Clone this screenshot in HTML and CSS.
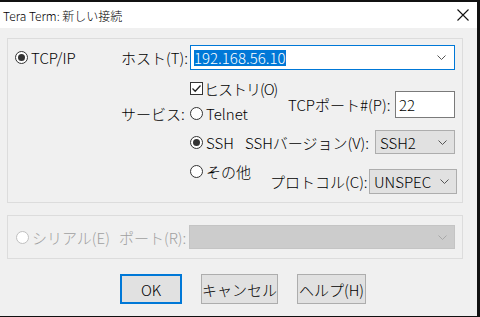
FILE: index.html
```html
<!DOCTYPE html>
<html lang="ja">
  <head>
    <meta charset="UTF-8" />
    <title>Tera Term: 新しい接続</title>
    <link rel="stylesheet" href="styles.css">
  </head>
  <body>
    <div class="window">
      <div class="titlebar">
        <span class="title">Tera Term: 新しい接続</span>
        <svg class="close" width="12" height="12" viewBox="0 0 12 12">
          <path d="M0.5 0.5 L11.5 11.5 M11.5 0.5 L0.5 11.5" stroke="#111" stroke-width="1.1" fill="none" />
        </svg>
      </div>

      <div class="dialog">
        <div class="group group-tcp">
          <label class="radio radio-main"><span class="circle checked"></span>TCP/IP</label>

          <div class="fields">
            <div class="host-row">
              <span class="lbl host-lbl">ホスト(T):</span>
              <div class="combo combo-host">
                <span class="selected">192.168.56.10</span>
                <svg class="chev" width="9" height="5" viewBox="0 0 9 5"><path d="M0.5 0.5 L4.5 4.5 L8.5 0.5" stroke="#555" fill="none" /></svg>
              </div>
            </div>

            <div class="service">
              <label class="check history"><span class="box">
                <svg width="11" height="11" viewBox="0 0 11 11"><path d="M1.5 5.5 L4.2 8.2 L9.5 2.5" stroke="#222" stroke-width="1.3" fill="none" /></svg>
              </span>ヒストリ(O)</label>

              <div class="port-group">
                <span class="lbl port-no-lbl">TCPポート#(P):</span>
                <div class="textbox">22</div>
              </div>

              <span class="lbl service-lbl">サービス:</span>
              <label class="radio telnet"><span class="circle"></span>Telnet</label>

              <div class="ssh-row">
                <label class="radio"><span class="circle checked"></span>SSH</label>
                <span class="lbl">SSHバージョン(V):</span>
                <div class="select select-ver">SSH2
                  <svg class="chev" width="9" height="5" viewBox="0 0 9 5"><path d="M0.5 0.5 L4.5 4.5 L8.5 0.5" stroke="#555" fill="none" /></svg>
                </div>
              </div>

              <div class="other-row">
                <label class="radio other"><span class="circle"></span>その他</label>
                <span class="lbl proto-lbl">プロトコル(C):</span>
                <div class="select select-proto">UNSPEC
                  <svg class="chev" width="9" height="5" viewBox="0 0 9 5"><path d="M0.5 0.5 L4.5 4.5 L8.5 0.5" stroke="#555" fill="none" /></svg>
                </div>
              </div>
            </div>
          </div>
        </div>

        <div class="group group-serial">
          <label class="radio radio-serial disabled"><span class="circle"></span>シリアル(E)</label>
          <span class="lbl disabled port-lbl">ポート(R):</span>
          <div class="select select-off">
            <svg class="chev" width="9" height="5" viewBox="0 0 9 5"><path d="M0.5 0.5 L4.5 4.5 L8.5 0.5" stroke="#a8a8a8" fill="none" /></svg>
          </div>
        </div>

        <div class="buttons">
          <button class="btn btn-ok">OK</button>
          <button class="btn btn-cancel">キャンセル</button>
          <button class="btn btn-help">ヘルプ(H)</button>
        </div>
      </div>
    </div>
  </body>
</html>
```

FILE: styles.css
```css
* {
  box-sizing: border-box;
  margin: 0;
  padding: 0;
}

body {
  background: #111;
  font-family: "Noto Sans CJK JP", sans-serif;
  font-size: 15px;
  font-weight: 300;
  color: #000;
  padding-top: 2px;
}

.window {
  width: 477px;
  height: 314px;
  background: #f0f0f0;
}

.titlebar {
  height: 26px;
  background: #fff;
  display: flex;
  align-items: center;
  justify-content: space-between;
  padding: 0 8px 0 3px;
}

.title {
  font-size: 12px;
}

.dialog {
  padding: 10px 0 0 7px;
}

.group {
  width: 456px;
  border: 1px solid #dcdcdc;
}

.group-tcp {
  display: flex;
  padding: 6px 7px 6px 7px;
}

.lbl {
  white-space: nowrap;
}

/* radio & checkbox */
.radio,
.check {
  display: flex;
  align-items: center;
  gap: 3px;
  white-space: nowrap;
}

.check {
  gap: 1px;
}

.history {
  letter-spacing: -1px;
}

.circle {
  width: 13px;
  height: 13px;
  border: 1px solid #333;
  border-radius: 50%;
  background: #fff;
  display: flex;
  align-items: center;
  justify-content: center;
}

.circle.checked::after {
  content: "";
  width: 7px;
  height: 7px;
  border-radius: 50%;
  background: #333;
}

.box {
  width: 13px;
  height: 13px;
  border: 1px solid #333;
  background: #fff;
  display: flex;
  align-items: center;
  justify-content: center;
}

.radio-main {
  width: 106px;
  height: 24px;
  flex: none;
}

.fields {
  flex: 1;
}

.host-row {
  display: flex;
  align-items: center;
}

.host-lbl {
  width: 69px;
}

.combo {
  flex: 1;
  height: 25px;
  background: #fff;
  border: 1px solid #0078d7;
  display: flex;
  align-items: center;
  justify-content: space-between;
  padding: 0 8px 0 3px;
}

.selected {
  background: #0078d7;
  color: #fff;
  line-height: 16px;
}

/* service grid */
.service {
  display: grid;
  grid-template-columns: 69px 95px 170px;
  grid-template-rows: 20px 30px 28px 40px;
  margin-top: 8px;
}

.history {
  grid-column: 2 / 3;
  grid-row: 1;
}

.port-group {
  grid-column: 3;
  grid-row: 1 / 3;
  justify-self: end;
  align-self: start;
  margin-top: 13px;
  display: flex;
  align-items: center;
  gap: 2px;
}

.port-no-lbl {
  width: 105px;
}

.textbox {
  width: 60px;
  height: 27px;
  background: #fff;
  border: 1px solid #7a7a7a;
  padding: 2px 0 0 3px;
}

.service-lbl {
  grid-column: 1;
  grid-row: 2;
  align-self: center;
}

.telnet {
  grid-column: 2;
  grid-row: 2;
}

.ssh-row,
.other-row {
  grid-column: 2 / 4;
  display: grid;
}

.ssh-row {
  grid-row: 3;
  grid-template-columns: 55px 130px 80px;
  align-items: center;
}

.other-row {
  grid-row: 4;
  grid-template-columns: 80px 99px 88px;
}

.other {
  align-self: start;
  margin-top: 5px;
}

.proto-lbl {
  align-self: end;
  margin-bottom: 4px;
}

.select {
  height: 24px;
  background: #e1e1e1;
  border: 1px solid #adadad;
  display: flex;
  align-items: center;
  justify-content: space-between;
  padding: 0 7px 0 4px;
}

.select-ver {
  width: 80px;
}

.select-proto {
  width: 88px;
  height: 25px;
  align-self: end;
  margin-bottom: 2px;
}

/* serial group */
.group-serial {
  margin-top: 12px;
  height: 44px;
  display: flex;
  align-items: center;
  padding: 0 7px 0 8px;
}

.radio-serial {
  width: 103px;
}

.disabled {
  color: #a0a0a0;
}

.radio.disabled .circle {
  border-color: #c0c0c0;
}

.port-lbl {
  width: 70px;
}

.select-off {
  flex: 1;
  height: 24px;
  background: #cccccc;
  border-color: #c4c4c4;
  justify-content: flex-end;
}

/* buttons */
.buttons {
  display: flex;
  gap: 19px;
  padding-left: 113px;
  margin-top: 15px;
}

.btn {
  height: 30px;
  font-family: inherit;
  font-size: 15px;
  font-weight: 300;
  background: #e1e1e1;
  border: 1px solid #adadad;
  color: #000;
}

.btn-ok {
  width: 62px;
  border: 2px solid #0078d7;
}

.btn-cancel {
  width: 77px;
}

.btn-help {
  width: 69px;
}
```
